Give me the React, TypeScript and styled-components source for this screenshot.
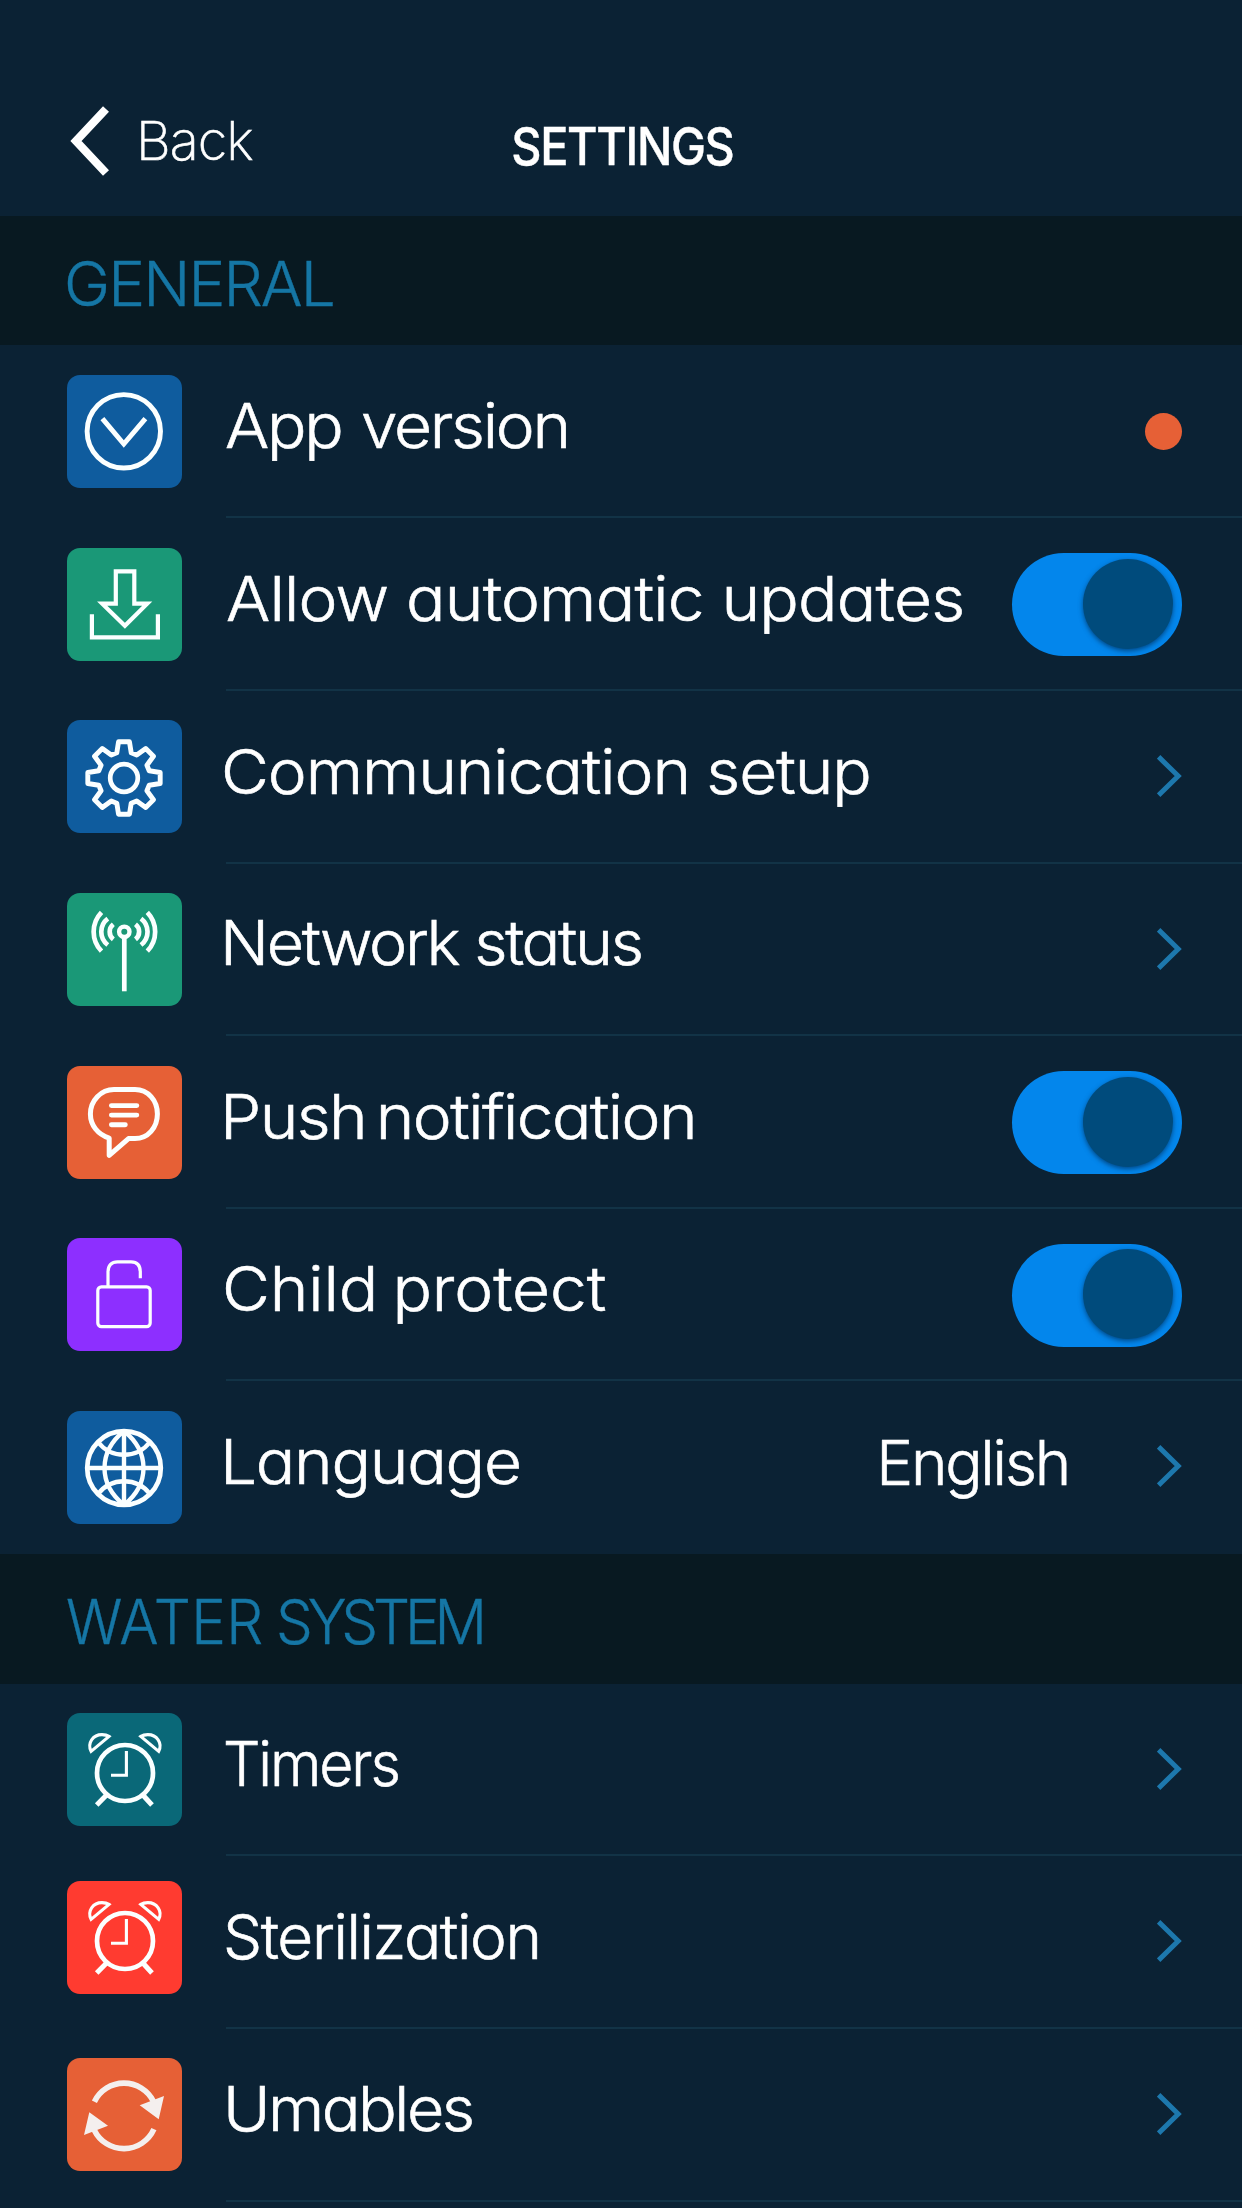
import React, { useState } from "react";
import styled, { createGlobalStyle } from "styled-components";

const color = {
  page: "#0b2234",
  band: "#081921",
  line: "#123346",
  accent: "#1576a5",
  chevron: "#1d78ad",
  blue: "#0f5c9e",
  green: "#1a9877",
  orange: "#e66036",
  purple: "#8d2fff",
  teal: "#0a6878",
  red: "#ff3b30",
};

const GlobalStyle = createGlobalStyle`
  html, body { margin: 0; background: ${color.page}; }
  * { box-sizing: border-box; }
`;

const Screen = styled.main`
  width: 1242px;
  height: 2208px;
  overflow: hidden;
  background: ${color.page};
  color: #fff;
  font-family: Inter, "Liberation Sans", sans-serif;
  font-weight: 300;
  font-feature-settings: "cv11";
`;

const Header = styled.header`
  display: grid;
  grid-template-columns: 1fr auto 1fr;
  height: 216px;
  padding: 65px 68px 0 70px;
`;

const BackButton = styled.button`
  display: flex;
  align-items: center;
  align-self: start;
  gap: 27px;
  height: 151px;
  padding: 0;
  border: 0;
  background: none;
  color: inherit;
  font: inherit;
`;

const BackText = styled.span`
  font-size: 54px;
  font-weight: 200;
  font-feature-settings: normal;
  line-height: 70px;
  letter-spacing: -1px;
  -webkit-text-stroke: 0.6px;
`;

const Title = styled.h1`
  margin: 0;
  padding-top: 47px;
  font-size: 52px;
  line-height: 70px;
  font-weight: 500;
  letter-spacing: -1.5px;
  transform: scaleX(0.9);
  -webkit-text-stroke: 0.4px;
`;

const Band = styled.h2<{ $height: number; $inset: number }>`
  height: ${(p) => p.$height}px;
  margin: 0;
  padding-left: ${(p) => p.$inset}px;
  background: ${color.band};
  color: ${color.accent};
  font-size: 62px;
  font-weight: 300;
  line-height: 136px;
  -webkit-text-stroke: 0.4px;
`;

const Heading = styled.span<{ $stretch: number }>`
  display: inline-block;
  word-spacing: -4px;
  transform: scaleX(${(p) => p.$stretch});
  transform-origin: left;
`;

const Word = styled.span<{ $tracking: number }>`
  letter-spacing: ${(p) => p.$tracking}px;
`;

const Row = styled.div<{ $height: number }>`
  display: flex;
  height: ${(p) => p.$height}px;
  padding-left: 67px;
`;

const Tile = styled.div<{ $bg: string; $top: number }>`
  flex: none;
  width: 115px;
  height: 113px;
  margin-top: ${(p) => p.$top}px;
  border-radius: 13px;
  background: ${(p) => p.$bg};
  svg { display: block; }
`;

const Body = styled.div<{ $last?: boolean }>`
  flex: 1;
  display: flex;
  align-items: center;
  margin-left: 44px;
  padding-right: 60px;
  border-bottom: 2px solid ${(p) => (p.$last ? "transparent" : color.line)};
`;

const Label = styled.span<{ $tracking: number; $shift: number; $stretch: number; $lift: number; $gap: number }>`
  flex: 1;
  margin-left: ${(p) => p.$shift}px;
  padding-bottom: ${(p) => p.$lift}px;
  font-size: 62px;
  line-height: 80px;
  white-space: nowrap;
  word-spacing: ${(p) => p.$gap}px;
  letter-spacing: ${(p) => p.$tracking}px;
  transform: scaleX(${(p) => p.$stretch});
  transform-origin: left;
  -webkit-text-stroke: 0.6px;
`;

const Value = styled.span`
  margin-right: 88px;
  padding-bottom: 8px;
  font-size: 62px;
  line-height: 80px;
  letter-spacing: -2.2px;
  -webkit-text-stroke: 0.6px;
`;

const Dot = styled.span`
  width: 37px;
  height: 37px;
  margin-top: 2px;
  border-radius: 50%;
  background: ${color.orange};
`;

const Track = styled.button<{ $on: boolean }>`
  display: flex;
  align-items: center;
  justify-content: ${(p) => (p.$on ? "flex-end" : "flex-start")};
  flex: none;
  width: 170px;
  height: 103px;
  margin: 2px 0 0;
  padding: 0 9px 2px;
  border: 0;
  border-radius: 52px;
  background: ${(p) => (p.$on ? "#0386ec" : "#24425a")};
`;

const Knob = styled.span`
  width: 90px;
  height: 90px;
  border-radius: 50%;
  background: #004b7c;
  box-shadow: 0 2px 5px rgba(0, 50, 95, 0.75);
`;

const IconSvg = ({ children, tint = "#fbffff" }: { children: React.ReactNode; tint?: string }) => (
  <svg width="115" height="113" viewBox="0 0 115 113" fill="none" stroke={tint} strokeWidth="4.7">
    {children}
  </svg>
);

const gearPath = (() => {
  const pts: string[] = [];
  for (let i = 0; i < 8; i++) {
    for (const [r, d] of [[26.2, -16], [36.6, -8.6], [36.6, 8.6], [26.2, 16]]) {
      const a = ((i * 45 + d) * Math.PI) / 180;
      pts.push(`${(57 + r * Math.sin(a)).toFixed(2)} ${(58 - r * Math.cos(a)).toFixed(2)}`);
    }
  }
  return `M${pts.join("L")}Z`;
})();

const VersionIcon = () => (
  <IconSvg>
    <circle cx="56.8" cy="56.3" r="36.7" strokeWidth="4.9" />
    <path d="M35.4 43.6L56.8 69L78.4 43.6" strokeWidth="5" />
  </IconSvg>
);

const DownloadIcon = () => (
  <IconSvg>
    <path d="M48.8 23.3H67.3V55.7H80.2L57.9 77.8L35.2 55.7H48.8Z" strokeWidth="4.2" />
    <path d="M24.9 66.3V89.3H90.9V66.3" strokeWidth="4.2" />
  </IconSvg>
);

const GearIcon = () => (
  <IconSvg>
    <path d={gearPath} strokeLinejoin="round" strokeWidth="4.9" />
    <circle cx="57" cy="58" r="13.8" />
  </IconSvg>
);

const AntennaIcon = () => {
  const waves = "M68.5 31.2A9.8 9.8 0 0 1 68.5 46.4M74 25.6A16.6 16.6 0 0 1 74 52M80.3 19.3A28 28 0 0 1 80.3 58.2";
  return (
    <IconSvg>
      <circle cx="57.3" cy="38.8" r="5.2" strokeWidth="4.4" />
      <path d="M57.3 45V98.3" />
      <path d={waves} />
      <path d={waves} transform="matrix(-1 0 0 1 114.8 0)" />
    </IconSvg>
  );
};

const ChatIcon = () => (
  <IconSvg>
    <path
      d="M47 23.5H68C81 23.5 90.4 34.5 90.4 48S81 72.6 68 72.6H61.5L42.2 89.3V72.2C31 68.6 23.4 59.5 23.4 48C23.4 34.5 34 23.5 47 23.5Z"
      strokeWidth="5"
      strokeLinejoin="round"
    />
    <path d="M44.4 39.6H69.8M44.4 49.1H69.8M44.4 58.7H58.3" strokeWidth="4.9" strokeLinecap="round" />
  </IconSvg>
);

const LockIcon = () => (
  <IconSvg>
    <rect x="30.8" y="48.9" width="52.4" height="39.8" rx="3.6" strokeWidth="3.2" />
    <path d="M41 48.9V34C41 27.5 44.5 23.8 50.5 23.8H64C70 23.8 73.3 27.5 73.3 34V40.3" strokeWidth="3.2" />
  </IconSvg>
);

const GlobeIcon = () => (
  <IconSvg>
    <circle cx="57" cy="57" r="36.8" />
    <path d="M57 20V94M20 57H94" strokeWidth="4.4" />
    <path d="M57 20C31 41 31 73 57 94M57 20C83 41 83 73 57 94" strokeWidth="4.4" />
    <path d="M31 31C44 48 70 48 83 31M31 83C44 66 70 66 83 83" strokeWidth="4.4" />
  </IconSvg>
);

const AlarmIcon = () => {
  const bell = "M24.1 38.4C20 30 26 21.6 35 21.6C37.8 21.6 40 22.1 42 23.4Z";
  return (
    <IconSvg>
      <circle cx="58" cy="60" r="28" />
      <path d="M59.4 38V62.3H44" strokeWidth="3.1" />
      <path d="M39.8 81.8L29.7 92M75.6 81.8L85 92" strokeWidth="5" />
      <path d={bell} strokeWidth="3.1" />
      <path d={bell} strokeWidth="3.1" transform="matrix(-1 0 0 1 115.8 0)" />
    </IconSvg>
  );
};

const RefreshIcon = () => (
  <IconSvg tint="#f4efee">
    <path d="M27.4 43.7A32.9 32.9 0 0 1 86.5 43.5" strokeWidth="5.6" />
    <path d="M27.2 72A32.9 32.9 0 0 0 86.9 71.2" strokeWidth="5.6" />
    <path d="M97 38L91.7 61.3L72.7 47.3ZM22.3 54.3L17 77L41 67.7Z" fill="#f4efee" stroke="none" />
  </IconSvg>
);

const ChevronSvg = styled.svg`
  flex: none;
  margin-bottom: 1px;
`;

const Chevron = () => (
  <ChevronSvg width="25" height="42" viewBox="0 0 25 42" fill="none" stroke={color.chevron} strokeWidth="5">
    <path d="M1.6 1.9L21.2 21L1.6 40.1" />
  </ChevronSvg>
);

const Toggle = () => {
  const [on, setOn] = useState(true);
  return (
    <Track $on={on} role="switch" aria-checked={on} onClick={() => setOn(!on)}>
      <Knob />
    </Track>
  );
};

type Item = {
  label: string;
  icon: React.ReactNode;
  bg: string;
  height: number;
  top: number;
  tracking: number;
  shift: number;
  stretch?: number;
  lift?: number;
  gap?: number;
  value?: string;
  control: "dot" | "toggle" | "chevron";
};

const general: Item[] = [
  { label: "App version", icon: <VersionIcon />, bg: color.blue, height: 173, top: 30, tracking: -2.15, shift: -1, stretch: 1.06, gap: 3, control: "dot" },
  { label: "Allow automatic updates", icon: <DownloadIcon />, bg: color.green, height: 173, top: 30, tracking: -0.75, shift: 0, stretch: 1.06, gap: 0, control: "toggle" },
  { label: "Communication setup", icon: <GearIcon />, bg: color.blue, height: 173, top: 29, tracking: -1.02, shift: -5, stretch: 1.06, gap: -1, control: "chevron" },
  { label: "Network status", icon: <AntennaIcon />, bg: color.green, height: 172, top: 29, tracking: -2.2, shift: -6, stretch: 1.04, lift: 12, gap: 0, control: "chevron" },
  { label: "Push notification", icon: <ChatIcon />, bg: color.orange, height: 173, top: 30, tracking: -1.5, shift: -6, stretch: 1.06, gap: -7, control: "toggle" },
  { label: "Child protect", icon: <LockIcon />, bg: color.purple, height: 172, top: 29, tracking: -0.1, shift: -4, stretch: 1.06, gap: -4, control: "toggle" },
  { label: "Language", icon: <GlobeIcon />, bg: color.blue, height: 173, top: 30, tracking: -1.2, shift: -6, stretch: 1.06, lift: 9, value: "English", control: "chevron" },
];

const water: Item[] = [
  { label: "Timers", icon: <AlarmIcon />, bg: color.teal, height: 172, top: 29, tracking: -2.2, shift: -3, stretch: 0.95, control: "chevron" },
  { label: "Sterilization", icon: <AlarmIcon />, bg: color.red, height: 173, top: 25, tracking: -1.4, shift: -3, lift: 10, control: "chevron" },
  { label: "Umables", icon: <RefreshIcon />, bg: color.orange, height: 173, top: 29, tracking: -2.4, shift: -3, stretch: 1.04, lift: 12, control: "chevron" },
];

const Items = ({ items, openEnded }: { items: Item[]; openEnded?: boolean }) => (
  <>
    {items.map((it, i) => (
      <Row key={it.label} $height={it.height}>
        <Tile $bg={it.bg} $top={it.top}>{it.icon}</Tile>
        <Body $last={!openEnded && i === items.length - 1}>
          <Label
            $tracking={it.tracking}
            $shift={it.shift}
            $stretch={it.stretch ?? 1}
            $lift={it.lift ?? 10}
            $gap={it.gap ?? 0}
          >
            {it.label}
          </Label>
          {it.value && <Value>{it.value}</Value>}
          {it.control === "dot" && <Dot />}
          {it.control === "toggle" && <Toggle />}
          {it.control === "chevron" && <Chevron />}
        </Body>
      </Row>
    ))}
  </>
);

export default function App() {
  return (
    <Screen>
      <GlobalStyle />
      <Header>
        <BackButton>
          <svg width="39" height="70" viewBox="0 0 39 70" fill="none" stroke="#fff" strokeWidth="8.2">
            <path d="M36 3L6 35L36 67" />
          </svg>
          <BackText>Back</BackText>
        </BackButton>
        <Title>SETTINGS</Title>
      </Header>
      <Band $height={129} $inset={64}>
        <Heading $stretch={1}><Word $tracking={-1.9}>GENERAL</Word></Heading>
      </Band>
      <Items items={general} />
      <Band $height={130} $inset={66}>
        <Heading $stretch={0.94}>
          <Word $tracking={0.3}>WATER</Word> <Word $tracking={-5.5}>SYSTEM</Word>
        </Heading>
      </Band>
      <Items items={water} openEnded />
    </Screen>
  );
}
